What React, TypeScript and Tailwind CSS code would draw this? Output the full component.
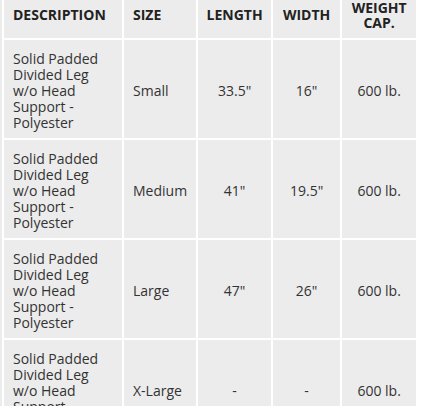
const rows = [
  { size: 'Small', length: '33.5"', width: '16"', cap: '600 lb.' },
  { size: 'Medium', length: '41"', width: '19.5"', cap: '600 lb.' },
  { size: 'Large', length: '47"', width: '26"', cap: '600 lb.' },
  { size: 'X-Large', length: '-', width: '-', cap: '600 lb.' },
]

export default function App() {
  return (
    <div
      className="w-[440px] h-[406px] overflow-hidden bg-white flex text-[#333]"
      style={{ fontFamily: '"Open Sans", "Noto Sans", sans-serif' }}
    >
      <div className="w-[2px] shrink-0 bg-[#ececec]" />
      <div className="-mt-[2px]">
        <table className="table-fixed border-separate border-spacing-[2px] bg-white text-[14px] leading-4">
          <colgroup>
            <col className="w-[118px]" />
            <col className="w-[71px]" />
            <col className="w-[73px]" />
            <col className="w-[67px]" />
            <col className="w-[74px]" />
          </colgroup>
          <thead>
            <tr className="h-[37px] font-bold text-[#222] uppercase">
              <th className="bg-[#ececec] px-[9px] pb-[8px] text-left align-middle">Description</th>
              <th className="bg-[#ececec] px-[9px] pb-[8px] text-left align-middle">Size</th>
              <th className="bg-[#ececec] pb-[8px] text-center align-middle">Length</th>
              <th className="bg-[#ececec] pb-[8px] text-center align-middle">Width</th>
              <th className="bg-[#ececec] pb-[8px] text-center align-middle leading-[15px]">
                Weight
                <br />
                Cap.
              </th>
            </tr>
          </thead>
          <tbody>
            {rows.map((r) => (
              <tr key={r.size} className="h-[98px]">
                <td className="bg-[#ececec] px-[9px] pt-[4px] align-middle">
                  Solid Padded Divided Leg w/o Head Support - Polyester
                </td>
                <td className="bg-[#ececec] px-[9px] pt-[4px] align-middle">{r.size}</td>
                <td className="bg-[#ececec] pt-[4px] text-center align-middle">{r.length}</td>
                <td className="bg-[#ececec] pt-[4px] text-center align-middle">{r.width}</td>
                <td className="bg-[#ececec] pt-[4px] text-center align-middle">{r.cap}</td>
              </tr>
            ))}
          </tbody>
        </table>
      </div>
    </div>
  )
}
